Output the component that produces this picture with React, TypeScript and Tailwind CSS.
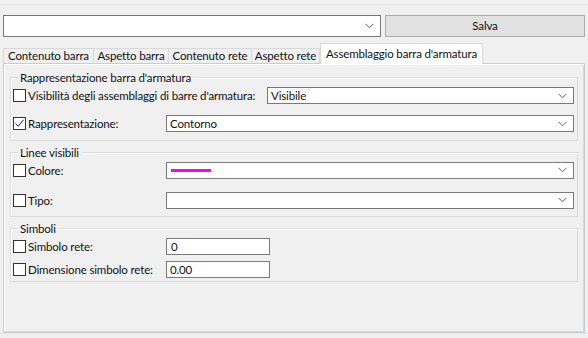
import React from 'react';

const Chevron: React.FC = () => (
  <svg width="9" height="6" viewBox="0 0 9 6" className="shrink-0">
    <path d="M0.5 0.8 L4.5 4.8 L8.5 0.8" fill="none" stroke="#606060" strokeWidth="1" />
  </svg>
);

const CheckBox: React.FC<{ checked?: boolean }> = ({ checked }) => (
  <span className="w-[13px] h-[13px] border border-[#333333] bg-white shrink-0 flex items-center justify-center">
    {checked && (
      <svg width="11" height="11" viewBox="0 0 11 11">
        <path d="M1.5 5.5 L4.2 8.3 L9.5 1.8" fill="none" stroke="#222222" strokeWidth="1" />
      </svg>
    )}
  </span>
);

const Select: React.FC<{ value?: string; children?: React.ReactNode }> = ({ value, children }) => (
  <div className="flex-1 h-[17px] border border-[#7a7a7a] bg-white flex items-center pl-[3px] pr-[6px]">
    <div className="flex-1 flex items-center">{value ?? children}</div>
    <Chevron />
  </div>
);

const Row: React.FC<{ label: string; checked?: boolean; labelWidth: string; children: React.ReactNode }> = ({
  label,
  checked,
  labelWidth,
  children,
}) => (
  <div className="flex items-center">
    <div className={`flex items-center gap-[2px] shrink-0 whitespace-nowrap ${labelWidth}`}>
      <CheckBox checked={checked} />
      <span>{label}</span>
    </div>
    {children}
  </div>
);

const Group: React.FC<{ title: string; className?: string; children: React.ReactNode }> = ({ title, className, children }) => (
  <fieldset
    className={`border border-[#dcdcdc] shadow-[inset_1px_1px_0_#ffffff] pl-[2px] pr-[3px] ${className ?? ''}`}
  >
    <legend className="ml-[5px] px-[2px] leading-[15px]">{title}</legend>
    {children}
  </fieldset>
);

const tabs = [
  { label: 'Contenuto barra', w: 'w-[91px] border-l' },
  { label: 'Aspetto barra', w: 'w-[75px]' },
  { label: 'Contenuto rete', w: 'w-[83px]' },
  { label: 'Aspetto rete', w: 'w-[68px]' },
];

export default function App() {
  return (
    <div
      className="w-[588px] h-[338px] bg-[#f0f0f0] text-[11.5px] tracking-[-0.15px] text-[#111111] overflow-hidden flex flex-col"
      style={{ fontFamily: 'Lato, "Noto Sans", sans-serif' }}
    >
      <div className="h-[5px] border-b border-[#e6e6e6] shrink-0" />

      {/* top bar */}
      <div className="flex gap-[4px] px-[3px] pt-[10px] shrink-0">
        <div className="w-[378px] h-[22px] border border-[#7a7a7a] bg-white flex items-center justify-end pr-[6px]">
          <Chevron />
        </div>
        <button className="flex-1 h-[22px] border border-[#adadad] bg-[#e1e1e1] flex items-center justify-center">
          Salva
        </button>
      </div>

      {/* tabs */}
      <div className="flex items-end px-[3px] mt-[6px] h-[20px] shrink-0 relative z-10">
        {tabs.map((t) => (
          <div
            key={t.label}
            className={`h-[15px] border-t border-r border-[#d9d9d9] flex items-center justify-center whitespace-nowrap ${t.w}`}
          >
            {t.label}
          </div>
        ))}
        <div className="w-[163px] h-[21px] -mb-[1px] bg-white border border-b-0 border-[#d9d9d9] flex items-center justify-center whitespace-nowrap">
          Assemblaggio barra d'armatura
        </div>
      </div>

      {/* panel */}
      <div className="mx-[3px] h-[270px] border border-[#c9cdd0] shadow-[inset_1px_1px_0_#ffffff,inset_-1px_-1px_0_#d9d9d9] bg-[#f0f0f0] px-[6px] pt-[6px] shrink-0">
        <Group title="Rappresentazione barra d'armatura" className="pt-[2px] pb-[7px]">
          <div className="flex flex-col gap-[11px]">
            <Row label="Visibilità degli assemblaggi di barre d'armatura:" labelWidth="w-[254px]">
              <Select value="Visibile" />
            </Row>
            <Row label="Rappresentazione:" checked labelWidth="w-[153px]">
              <Select value="Contorno" />
            </Row>
          </div>
        </Group>

        <Group title="Linee visibili" className="mt-[4px] pt-[2px] pb-[7px]">
          <div className="flex flex-col gap-[13px]">
            <Row label="Colore:" labelWidth="w-[153px]">
              <Select>
                <span className="ml-[1px] w-[40px] h-[3px] bg-[#ff00ff]" />
              </Select>
            </Row>
            <Row label="Tipo:" labelWidth="w-[153px]">
              <Select value="" />
            </Row>
          </div>
        </Group>

        <Group title="Simboli" className="mt-[4px] pt-[2px] pb-[2px]">
          <div className="flex flex-col gap-[6px]">
            <Row label="Simbolo rete:" labelWidth="w-[153px]">
              <div className="w-[104px] h-[17px] border border-[#7a7a7a] bg-white flex items-center pl-[4px]">0</div>
            </Row>
            <Row label="Dimensione simbolo rete:" labelWidth="w-[153px]">
              <div className="w-[104px] h-[17px] border border-[#7a7a7a] bg-white flex items-center pl-[3px]">0.00</div>
            </Row>
          </div>
        </Group>
      </div>
      <div className="flex-1 border-t border-[#e6e6e6]" />
    </div>
  );
}
